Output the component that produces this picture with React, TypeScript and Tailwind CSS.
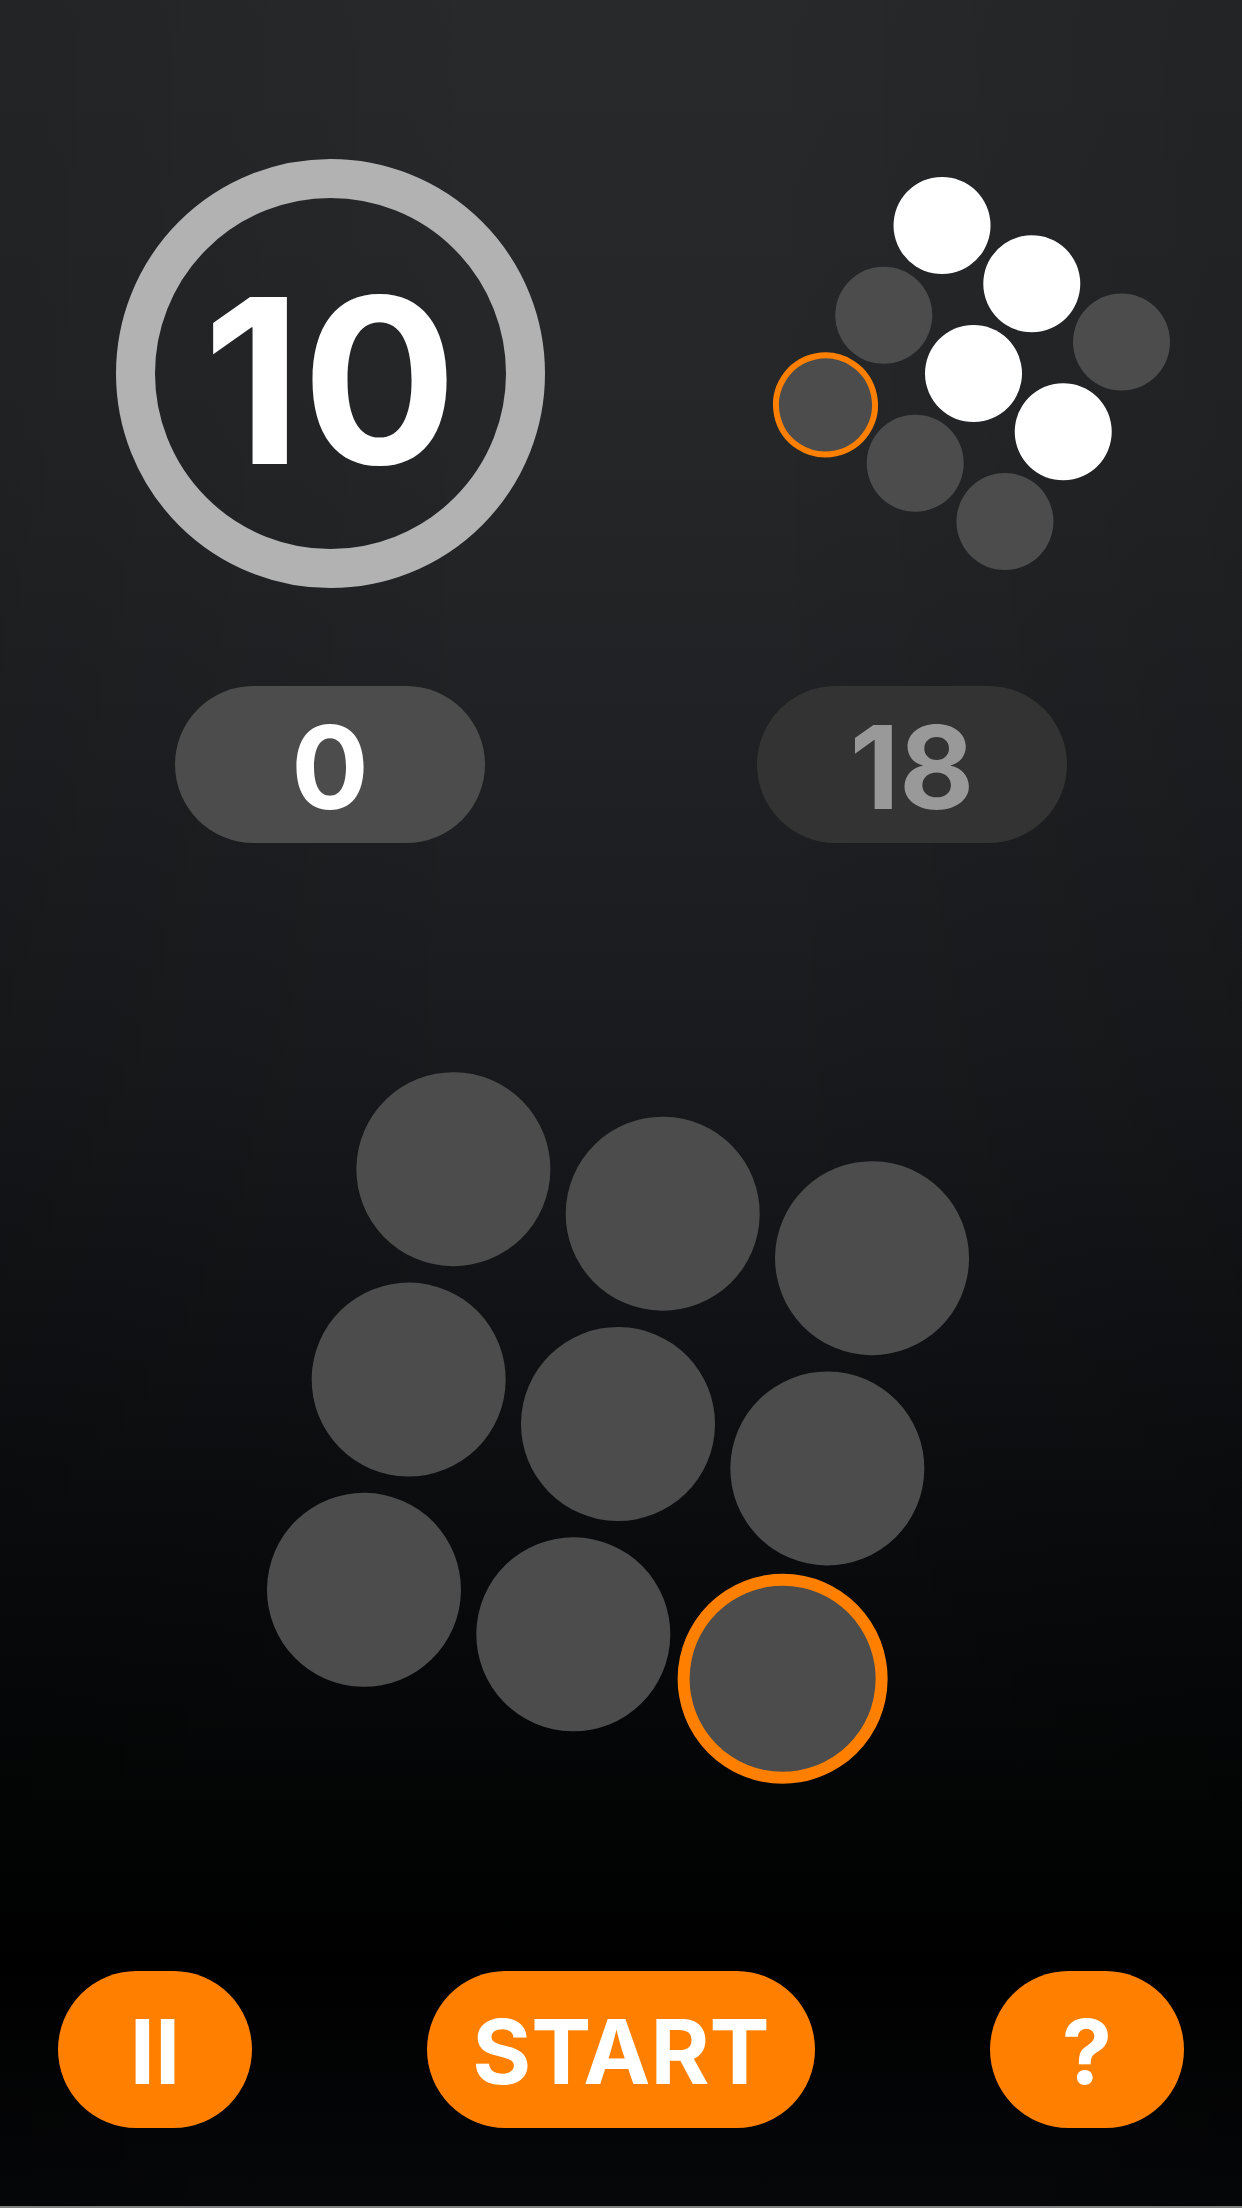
import { useState } from 'react';

const target = [true, true, false, false, true, true, false, false, false];

export default function App() {
  const [cells, setCells] = useState<boolean[]>(Array(9).fill(false));

  const toggle = (index: number) => {
    setCells(cells.map((on, i) => (i === index ? !on : on)));
  };

  return (
    <main className="flex min-h-screen flex-col border-b-2 border-[#808080] bg-[linear-gradient(90deg,#0002,#0000_40%,#0000_60%,#0002),linear-gradient(#28292b,#242628_20%,#1f2023_35%,#191a1d_48%,#101215_60%,#090a0c_72%,#030404_82%,#000_89%,#060709)] font-['Inter',sans-serif] font-bold text-white">
      <header className="grid grid-cols-[660fr_582fr] gap-y-[98px] pt-[159px]">
        <div className="flex justify-center">
          <div className="flex size-[429px] items-center justify-center rounded-full border-[39px] border-[#b2b2b2] pt-3 text-[230px] leading-none">
            10
          </div>
        </div>
        <div className="flex items-center justify-center pl-11">
          <div className="grid rotate-33 grid-cols-3 gap-2.5">
            {target.map((on, i) => (
              <div
                key={i}
                className={`size-[97px] rounded-full ${on ? 'bg-white' : 'bg-[#4c4c4c]'} ${
                  i === 6 ? 'outline-[6px] -outline-offset-2 outline-[#ff8000]' : ''
                }`}
              />
            ))}
          </div>
        </div>
        <div className="flex justify-center">
          <output className="flex h-[157px] w-[310px] items-center justify-center rounded-full bg-[#4c4c4c] pt-1.5 text-[115px] leading-none">
            0
          </output>
        </div>
        <div className="flex justify-center pr-[78px]">
          <output className="flex h-[157px] w-[310px] items-center justify-center rounded-full bg-[#333333] pt-1.5 text-[115px] leading-none text-[#999999]">
            18
          </output>
        </div>
      </header>

      <section className="flex flex-1 items-center justify-center pt-[34px] pr-1.5">
        <div className="grid rotate-12 grid-cols-3 gap-x-5 gap-y-[21px]">
          {cells.map((on, i) => (
            <button
              key={i}
              type="button"
              aria-label={`Cell ${i + 1}`}
              aria-pressed={on}
              onClick={() => toggle(i)}
              className={`size-[194px] rounded-full ${on ? 'bg-white' : 'bg-[#4c4c4c]'} ${
                i === 8 ? 'outline-[12px] -outline-offset-4 outline-[#ff8000]' : ''
              }`}
            />
          ))}
        </div>
      </section>

      <footer className="flex justify-between px-[58px] pb-[78px] text-[90px] leading-none">
        <button type="button" aria-label="Pause" className="h-[157px] w-[194px] rounded-full bg-[#ff8000] pt-1">
          II
        </button>
        <button type="button" className="h-[157px] w-[388px] rounded-full bg-[#ff8000] pt-1">
          START
        </button>
        <button type="button" aria-label="Help" className="h-[157px] w-[194px] rounded-full bg-[#ff8000] pt-1">
          ?
        </button>
      </footer>
    </main>
  );
}
